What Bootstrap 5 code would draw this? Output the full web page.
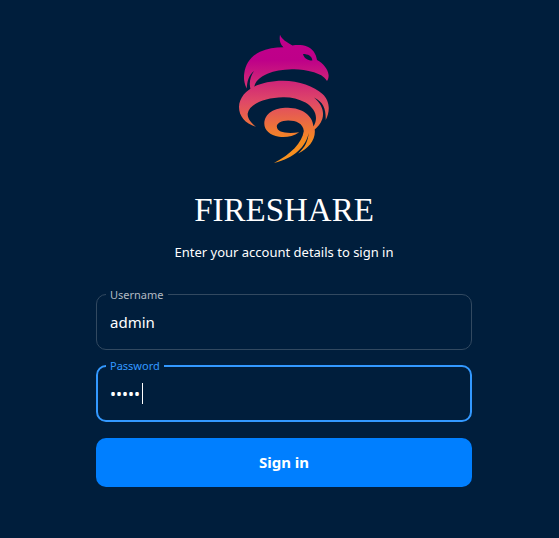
<!DOCTYPE html>
<html lang="en">
<head>
<meta charset="utf-8">
<meta name="viewport" content="width=device-width, initial-scale=1">
<title>Fireshare</title>
<link href="https://cdn.jsdelivr.net/npm/bootstrap@5.3.0/dist/css/bootstrap.min.css" rel="stylesheet">
<style>
body { background: #001e3c; color: #fff; font-family: "Noto Sans", sans-serif; }
.login-page { padding: 34px 12px 48px 21px; }
.login-form { max-width: 376px; }
.brand-logo { width: 92px; height: 130px; }
.brand-title { font: 400 33px/40px "Liberation Serif", serif; margin-top: 26px; }
.intro { font-size: 13px; line-height: 20px; margin: 12px 0 32px; }
.field-label { position: absolute; left: 10px; top: -7px; padding: 0 4px; font-size: 11px; line-height: 16px; background: #001e3c; color: #b2bac2; z-index: 6; }
.field-box, .field-box:focus { height: 56px; padding: 0 13px; border: 1px solid #324960; border-radius: 10px; background: transparent; color: #fff; font-size: 15px; box-shadow: none; }
.field-active .field-box { height: 57px; border: 2px solid #3399ff; padding: 0 12px; font-size: 16px; caret-color: transparent; }
.field-active .field-label { color: #3399ff; }
.field-gap { margin-bottom: 15px; }
.text-caret { position: absolute; left: 46px; top: 18px; width: 1px; height: 21px; background: #fff; }
.btn-signin, .btn-signin:hover { height: 49px; border: 0; border-radius: 10px; background: #007fff; color: #fff; font-size: 15px; font-weight: 700; }
</style>
<script src="https://cdn.jsdelivr.net/npm/bootstrap@5.3.0/dist/js/bootstrap.bundle.min.js"></script>
</head>
<body>
<main class="login-page d-flex justify-content-center">
  <form class="login-form w-100 text-center" onsubmit="return false">
    <svg class="brand-logo d-block mx-auto" viewBox="238 34 92 130" role="img" aria-label="Fireshare logo">
      <defs>
        <linearGradient id="flame" gradientUnits="userSpaceOnUse" x1="0" y1="34" x2="0" y2="164">
          <stop offset="0" stop-color="#c1008b"/>
          <stop offset=".2" stop-color="#be0089"/>
          <stop offset=".52" stop-color="#df4867"/>
          <stop offset=".82" stop-color="#f68a20"/>
          <stop offset="1" stop-color="#f7931e"/>
        </linearGradient>
      </defs>
      <g fill="url(#flame)" fill-rule="evenodd">
        <path d="M280 34.700C282 39.500 286.500 42 292.500 45.400C298 44.800 303 45 307 46.600C313 49 316 54 317 60C323 63 328 69 328.600 75C328.800 77.500 328 79.500 327 81C324 76 319 74 314 72.300C306 69.800 299 69 292 69.200C282 69.500 274 71 268 73.500C259 77.500 254.500 82 254.200 88L251 90.500C248.500 84 250 77 254 71C248.500 75.500 247 82 246.800 88.500C244 83 243.500 78 244.300 73C245.500 64 251 56 260 51.800C267 48.600 275 47.300 283.500 47.300C279.500 44 279.300 39 280 34.700ZM303 54C304 58.500 308 60.700 312.400 60.500C312 56 308 54 303 54Z"/>
        <path d="M255.800 126.800C245 123.500 239 116 239 107C239.500 91 258 80.700 283 80.700C299 80.700 314 86.500 322.500 94C330.500 101.500 330 112 325.700 120C326 109 323.500 102 314 97.500C322 104 324.500 112 322.300 119C320.500 124 317.500 127 314.700 129.500C316 139 309 148.500 298.200 153.500C305.500 147 308 140.500 308.700 133C306 146 295 158 274 163C291 154 302 143 303.800 131C303 123.500 296 120.500 288 120.600C281.500 120.700 276.800 123.500 276.800 126.500C277 132.500 287 134 299.200 132.300C293 136.500 286 137.700 279 136.800C270 135.500 264.300 130 264.300 123.500C264.500 113 275 107.500 288 107.700C302 108 312.500 115 313.500 126.500C319 117 315 108.500 305.500 102.500C298 98.500 291 97 283 97.200C264 97.500 249 104.500 247.700 113.500C247.300 118.500 251 122.500 255.800 126.800Z"/>
      </g>
    </svg>
    <h1 class="brand-title mb-0">FIRESHARE</h1>
    <p class="intro">Enter your account details to sign in</p>
    <div class="position-relative field-gap">
      <label class="field-label" for="username">Username</label>
      <input class="form-control field-box" id="username" type="text" value="admin" autocomplete="username">
    </div>
    <div class="position-relative mb-3 field-active">
      <label class="field-label" for="password">Password</label>
      <input class="form-control field-box" id="password" type="password" value="admin" autocomplete="current-password">
      <span class="text-caret" aria-hidden="true"></span>
    </div>
    <button class="btn btn-signin w-100" type="submit">Sign in</button>
  </form>
</main>
</body>
</html>
